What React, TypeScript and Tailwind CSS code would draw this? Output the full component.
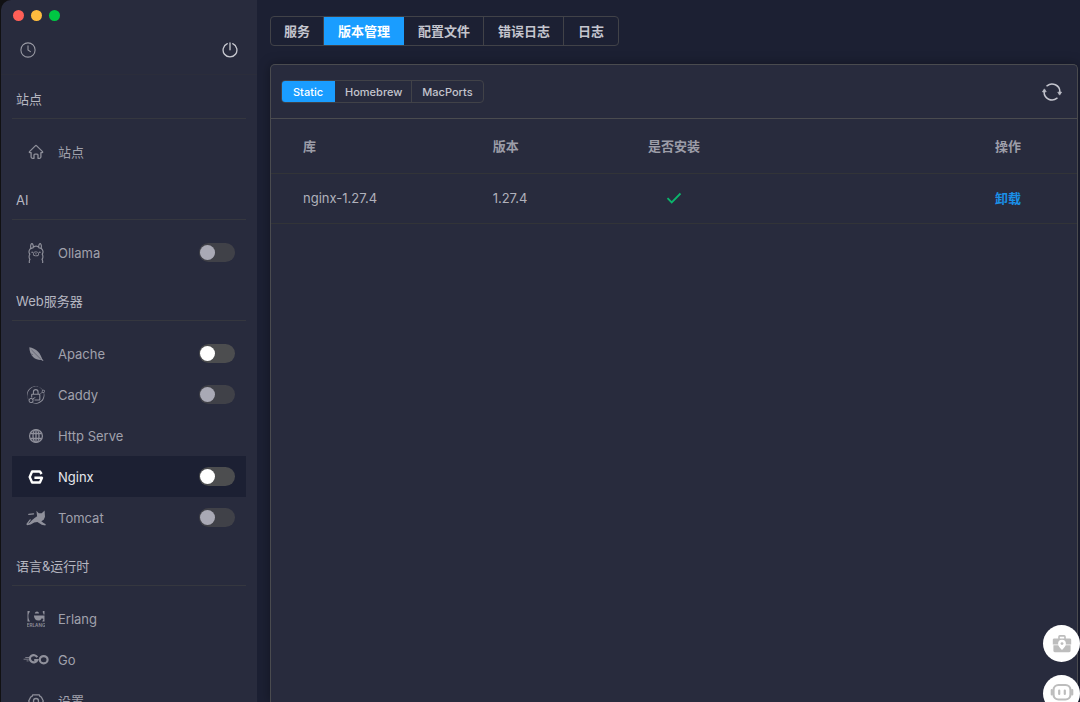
import React, { useState } from "react";
import { SiCaddy, SiOllama } from "react-icons/si";

type Item = {
  name: string;
  icon: React.ReactNode;
  toggle?: "on" | "dim";
};

type Section = { title: string; items: Item[] };

function HomeIcon() {
  return (
    <svg viewBox="0 0 16 16" className="size-4" fill="none" stroke="currentColor" strokeWidth="1.3" strokeLinecap="round" strokeLinejoin="round">
      <path d="M6 14.3H4.6a1.5 1.5 0 0 1-1.5-1.5V8.6H1.9c-.6 0-.8-.6-.4-1L7.3 1.9a1 1 0 0 1 1.4 0l5.8 5.7c.4.4.2 1-.4 1h-1.2v4.2a1.5 1.5 0 0 1-1.5 1.5H10v-3.2c0-.6-.4-1-1-1H7c-.6 0-1 .4-1 1z" />
    </svg>
  );
}

function ApacheIcon() {
  return (
    <svg viewBox="0 0 16 16" className="size-4">
      <path d="M1.3 1.2c3 .4 6.4 1.9 8.8 4.5 2.3 2.4 3.2 5 4.1 7.2l1.3 1.7-.6.5-1.7-1.2c-2.7.2-5.6-.6-7.9-2.7C2.7 8.7 1.4 5 1.3 1.2z" fill="currentColor" />
      <path d="M3.4 3.8 13 13.4M5 8.8l-2-.9" fill="none" stroke="#282b3d" strokeWidth=".4" />
    </svg>
  );
}

function TomcatIcon() {
  return (
    <svg viewBox="0 0 20 16" className="h-4 w-5" fill="currentColor">
      <path d="M10.4.8 12.800 3.200h2.900L18.600.4l.4 6.400-1.300 2.900-2.400 1.500 2.300 1.900 2.200 1.200-.5 1.200-3.600-.8-4.300-2.700-3.200.4-3.500 2.200-3.600.6-.2-1.300 2.700-1.100 2.300-2.500 2.700-2.300 2.500-1.700z" />
      <path d="M2.800 4.400 7.600 3.800M1 14.200 4.200 9.800" fill="none" stroke="currentColor" strokeWidth="1.2" strokeLinecap="round" />
    </svg>
  );
}

function ErlangIcon() {
  return (
    <svg viewBox="0 0 18 18" className="size-[18px]" fill="currentColor">
      <path d="M.5 1h2.200v1C1.700 3.100 1.400 4.600 1.400 6.200c0 2 .5 3.800 1.600 5.200H.5zM17.500 1h-1.700v1.600c.5.600.7 1.300.7 2h1zM7.800 3.600C8 2.400 8.900 1.600 10 1.600s1.900.8 2 2zM6.900 5.400h10.600v6h-2.300l1.300-2.300-1.700-.9c-.8 1.300-1.800 2.400-3.400 2.400-2.800 0-4.300-2.200-4.500-5.200z" />
      <text x="9" y="17.300" textAnchor="middle" fontSize="4.600" fontWeight="600">ERLANG</text>
    </svg>
  );
}

function GoIcon() {
  return (
    <svg viewBox="0 0 26 12" className="h-3 w-[26px] shrink-0" fill="none" stroke="currentColor">
      <path d="M2.300 3.500h4M.6 5.200h5.200M3.600 6.900h2" strokeWidth=".8" />
      <path d="M14.200 3.300A3.800 3.600 0 1 0 14.300 6H11.200" strokeWidth="2.200" />
      <ellipse cx="20.700" cy="5.700" rx="3.900" ry="3.600" strokeWidth="2.200" />
    </svg>
  );
}

function GlobeIcon() {
  return (
    <svg viewBox="0 0 16 16" className="size-4" fill="none" stroke="currentColor" strokeWidth="1.3">
      <circle cx="8" cy="8" r="6.4" />
      <ellipse cx="8" cy="8" rx="3" ry="6.4" />
      <path d="M8 1.800v12.400M2.400 5.500h11.200M2.400 10.500h11.200" />
    </svg>
  );
}

function NginxIcon() {
  return (
    <svg viewBox="0 0 16 16" className="size-4" fill="none" stroke="currentColor" strokeWidth="2.4" strokeLinejoin="round">
      <path d="M13.600 5 11.900 2.500H4.100L1.700 8l2.400 5.500h7.800L14 8.800H6.400" />
    </svg>
  );
}

function SettingIcon() {
  return (
    <svg viewBox="0 0 16 16" className="size-4" fill="none" stroke="currentColor" strokeWidth="1.3" strokeLinejoin="round">
      <path d="M4.800 1.800h6.400l.8 1.600 1.300.6L15.300 8l-2 4-1.300.6-.8 1.600H4.800L4 12.600 2.700 12l-2-4 2-4L4 3.400z" />
      <circle cx="8" cy="8" r="2.500" />
    </svg>
  );
}

function ClockIcon() {
  return (
    <svg viewBox="0 0 16 16" className="size-4" fill="none" stroke="currentColor" strokeWidth="1.1" strokeLinecap="round">
      <circle cx="8" cy="8" r="7.1" />
      <path d="M8 3.8V8l2.4 1.6" />
    </svg>
  );
}

function PowerIcon() {
  return (
    <svg viewBox="0 0 16 16" className="size-4" fill="none" stroke="currentColor" strokeWidth="1.3" strokeLinecap="round">
      <path d="M5.3 1.7a6.900 6.900 0 1 0 5.400 0M8 .8v7" />
    </svg>
  );
}

function RefreshIcon() {
  return (
    <svg viewBox="0 0 20 20" className="size-5" fill="none" stroke="currentColor" strokeWidth="1.5" strokeLinecap="round">
      <path d="M5 3.800A7.900 7.900 0 0 1 17.900 10M15 16.200A7.900 7.900 0 0 1 2.100 10" />
      <path d="M16.200 10.200h3.300l-1.700 2.600zM3.800 9.800H.5l1.700-2.600z" fill="currentColor" strokeWidth=".8" strokeLinejoin="round" />
    </svg>
  );
}

const sections: Section[] = [
  { title: "站点", items: [{ name: "站点", icon: <HomeIcon /> }] },
  { title: "AI", items: [{ name: "Ollama", icon: <SiOllama className="size-5" />, toggle: "dim" }] },
  {
    title: "Web服务器",
    items: [
      { name: "Apache", icon: <ApacheIcon />, toggle: "on" },
      { name: "Caddy", icon: <SiCaddy className="size-[18px]" />, toggle: "dim" },
      { name: "Http Serve", icon: <GlobeIcon /> },
      { name: "Nginx", icon: <NginxIcon />, toggle: "on" },
      { name: "Tomcat", icon: <TomcatIcon />, toggle: "dim" },
    ],
  },
  {
    title: "语言&运行时",
    items: [
      { name: "Erlang", icon: <ErlangIcon /> },
      { name: "Go", icon: <GoIcon /> },
      { name: "设置", icon: <SettingIcon /> },
    ],
  },
];

function Sidebar() {
  const [active, setActive] = useState("Nginx");
  return (
    <aside className="flex w-64 shrink-0 flex-col overflow-hidden rounded-tl-[10px] bg-[#282b3d]">
      <header className="flex h-[75px] shrink-0 flex-col border-b border-[#2b2d3b] pt-[10px]">
        <div className="flex gap-[7px] px-3">
          <span className="size-[11px] rounded-full bg-[#ff5f57]" />
          <span className="size-[11px] rounded-full bg-[#febc3e]" />
          <span className="size-[11px] rounded-full bg-[#00c843]" />
        </div>
        <div className="mt-[21px] flex justify-between px-[19px]">
          <button aria-label="History" className="text-[#9899a3]"><ClockIcon /></button>
          <button aria-label="Power" className="text-[#c8c9d0]"><PowerIcon /></button>
        </div>
      </header>
      <nav className="flex flex-col gap-2 px-[11px] pt-1">
        {sections.map((s) => (
          <section key={s.title}>
            <h2 className="flex h-10 items-center border-b border-[#35373f] px-1 text-[#b6b7c1]">{s.title}</h2>
            <ul className="mt-3">
              {s.items.map((it) => {
                const on = it.name === active;
                return (
                  <li
                    key={it.name}
                    className={`flex h-[41px] items-center pr-[11px] ${on ? "bg-[#1c2033] text-[#e6e7ec]" : "text-[#a0a1ac]"}`}
                  >
                    <a
                      href="#"
                      onClick={(e) => {
                        e.preventDefault();
                        setActive(it.name);
                      }}
                      className="flex h-full flex-1 items-center gap-[10px] pl-3"
                    >
                      <span className={`flex w-6 items-center justify-center ${on ? "text-white" : "text-[#8f909b]"}`}>{it.icon}</span>
                      {it.name}
                    </a>
                    {it.toggle && (
                      <input
                        type="checkbox"
                        role="switch"
                        aria-label={it.name}
                        className={`flex h-[19px] w-9 appearance-none items-center rounded-full px-px before:size-[15px] before:rounded-full checked:justify-end checked:bg-[#1a9dff] ${
                          it.toggle === "on" ? "bg-[#4c4d4f] before:bg-white" : "bg-[#404148] before:bg-[#a9a9b5]"
                        }`}
                      />
                    )}
                  </li>
                );
              })}
            </ul>
          </section>
        ))}
      </nav>
    </aside>
  );
}

function Tabs({ items, initial, small }: { items: string[]; initial: string; small?: boolean }) {
  const [active, setActive] = useState(initial);
  return (
    <div
      role="tablist"
      className={`flex w-fit overflow-hidden rounded border border-[#414248] ${small ? "h-[23px] text-[11px]" : "h-[30px] text-[13px]"}`}
    >
      {items.map((t, i) => (
        <button
          key={t}
          role="tab"
          aria-selected={t === active}
          onClick={() => setActive(t)}
          className={`-my-px ${small ? "px-[10px] font-medium first:px-3" : "px-[14px] font-semibold"} ${i === 0 ? "-ml-px" : ""} ${
            t === active
              ? "bg-[#1a9dff] text-white"
              : i < items.length - 1
                ? "text-[#c4c5ce] shadow-[inset_-1px_0_0_#414248]"
                : "text-[#c4c5ce]"
          }`}
        >
          {t}
        </button>
      ))}
    </div>
  );
}

function VersionPanel() {
  return (
    <section className="flex flex-1 flex-col rounded-t-[5px] border border-b-0 border-[#4a4b4f] bg-[#282b3d] shadow-[0_0_12px_rgba(0,0,0,0.35)]">
      <header className="flex h-[54px] shrink-0 items-center justify-between border-b border-[#4a4b4f] pr-[15px] pl-[10px]">
        <Tabs small items={["Static", "Homebrew", "MacPorts"]} initial="Static" />
        <button aria-label="Refresh" className="text-[#c4c5ce]"><RefreshIcon /></button>
      </header>
      <table className="w-full table-fixed text-left text-[#b0b1bb]">
        <thead>
          <tr className="h-[54px] border-b border-[#323438] text-[#9c9da8]">
            <th className="w-[27.5%] pl-8 font-semibold">库</th>
            <th className="w-[15%] font-semibold">版本</th>
            <th className="w-[15%] text-center font-semibold">是否安装</th>
            <th className="pr-14 text-right font-semibold">操作</th>
          </tr>
        </thead>
        <tbody>
          <tr className="h-[50px] border-b border-[#323438]">
            <td className="pl-8">nginx-1.27.4</td>
            <td>1.27.4</td>
            <td>
              <svg viewBox="0 0 16 14" className="mx-auto h-[14px] w-4" fill="none" stroke="#0bb56c" strokeWidth="1.8" role="img" aria-label="已安装">
                <path d="m1.5 7.2 4.2 4.2 8.8-8.9" />
              </svg>
            </td>
            <td className="pr-14 text-right">
              <button className="font-semibold text-[#1a90e8]">卸载</button>
            </td>
          </tr>
        </tbody>
      </table>
    </section>
  );
}

function FloatingButtons() {
  return (
    <div className="absolute right-0 -bottom-[10px] flex flex-col gap-[13px] text-[#bdbdbd]">
      <button aria-label="Toolbox" className="flex size-[37px] items-center justify-center rounded-full bg-white">
        <svg viewBox="0 0 20 20" className="size-5">
          <path d="M7 5V2.8c0-.5.4-.9.9-.9h4.2c.5 0 .9.4.9.9V5" fill="none" stroke="currentColor" strokeWidth="1.6" />
          <path d="M2.200 4.600h15.600c.8 0 1.400.6 1.400 1.400v4.400H.8V6c0-.8.6-1.400 1.400-1.400zM1.400 11.200h17.200v5.600c0 .8-.6 1.400-1.400 1.400H2.800c-.8 0-1.400-.6-1.400-1.400z" fill="currentColor" />
          <path d="M10 5.800a3.900 3.900 0 0 1 3.900 3.900c0 2.400-2 3.900-3.900 6.300-1.900-2.400-3.900-3.900-3.900-6.300A3.900 3.900 0 0 1 10 5.800z" fill="white" />
          <circle cx="10" cy="9.600" r="1.400" fill="currentColor" />
        </svg>
      </button>
      <button aria-label="Assistant" className="flex size-[37px] items-center justify-center rounded-full bg-white">
        <svg viewBox="0 0 26 22" className="h-[22px] w-[26px]" fill="none" stroke="currentColor" strokeWidth="2.200">
          <rect x="4.500" y="2" width="17" height="14.500" rx="5" />
          <path d="M2.800 7v4.500M23.200 7v4.500" strokeLinecap="round" />
          <path d="M10.200 7.500v3.500M15.800 7.500v3.500" strokeLinecap="round" />
          <path d="M8 20h10" strokeLinecap="round" />
        </svg>
      </button>
    </div>
  );
}

export default function App() {
  return (
    <div className="relative flex h-screen overflow-hidden bg-[#1c2033] font-['Inter','Noto_Sans_CJK_SC',sans-serif] text-[13px] leading-5">
      <div className="flex bg-[#111113] pl-px">
        <Sidebar />
      </div>
      <main className="flex flex-1 flex-col gap-[18px] pt-4 pr-[2px] pl-[13px]">
        <Tabs items={["服务", "版本管理", "配置文件", "错误日志", "日志"]} initial="版本管理" />
        <VersionPanel />
      </main>
      <FloatingButtons />
    </div>
  );
}
